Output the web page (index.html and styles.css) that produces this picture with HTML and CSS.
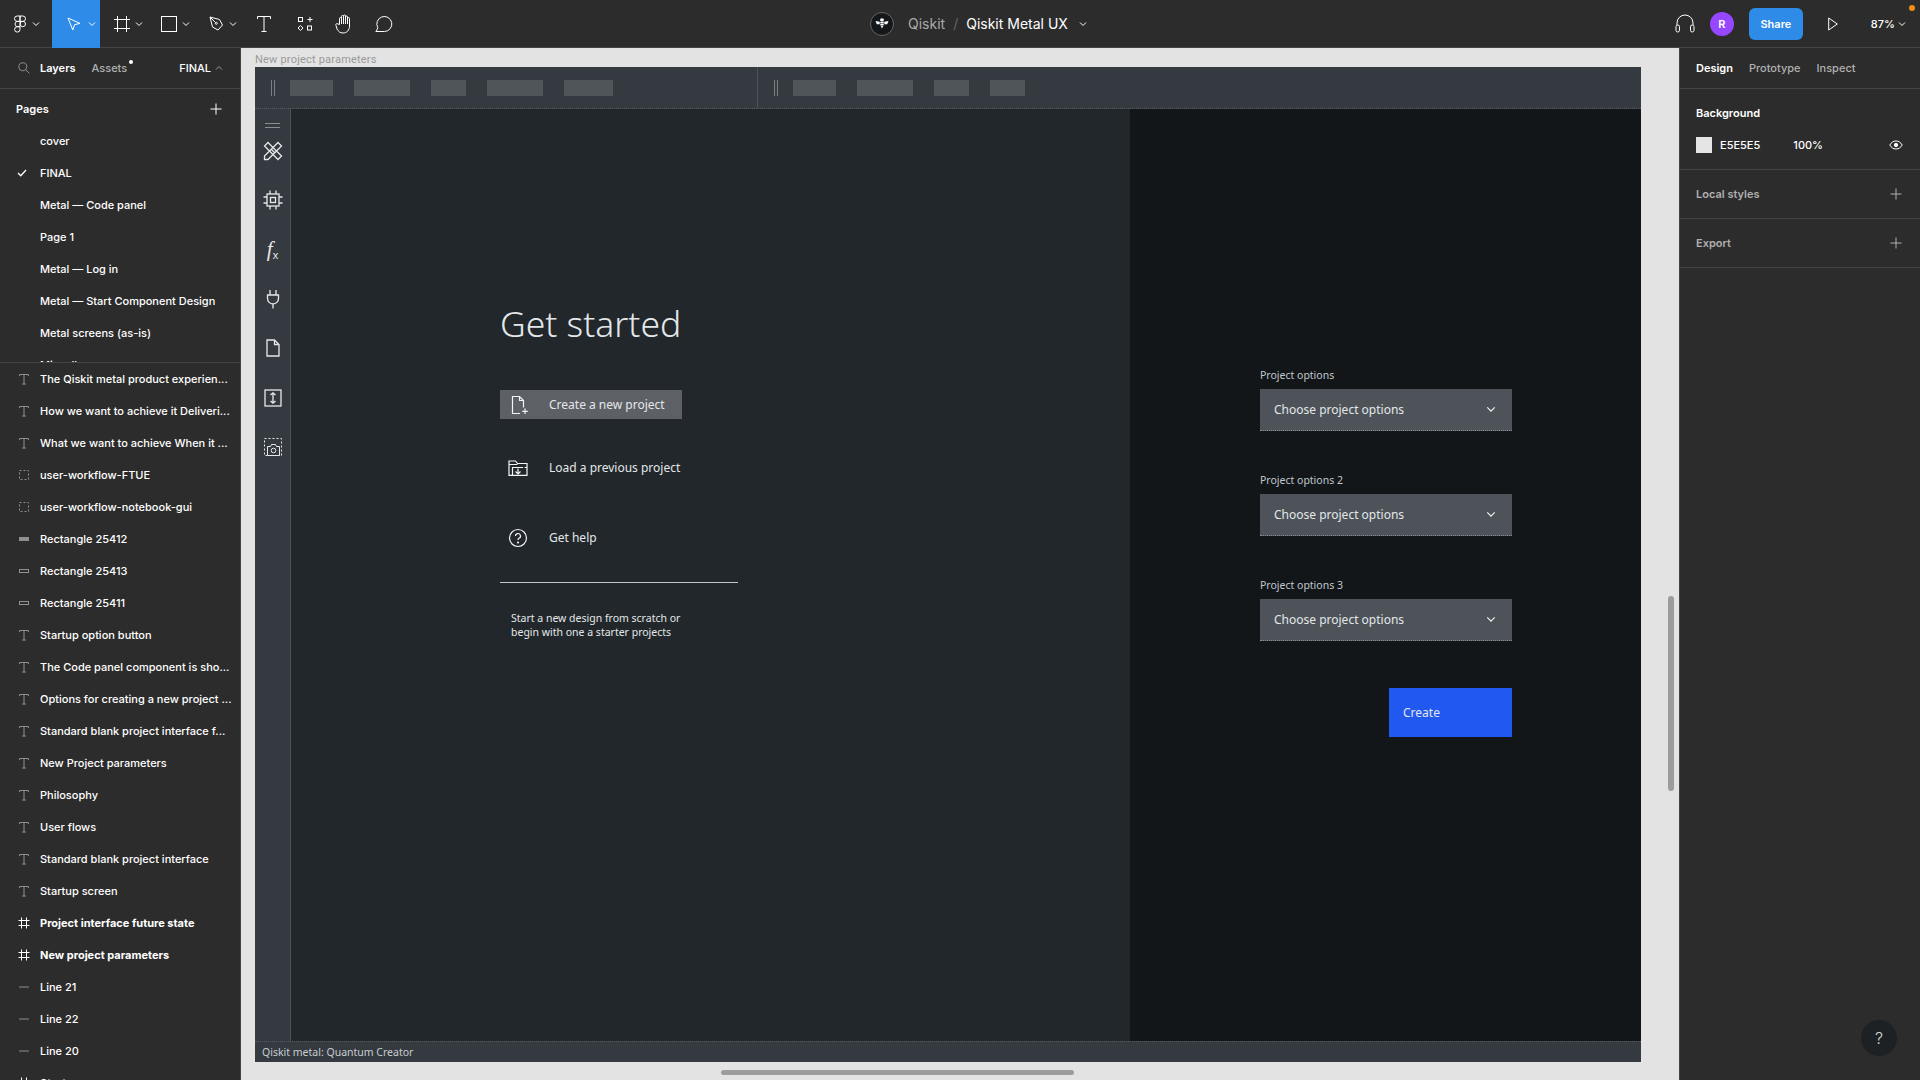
FILE: index.html
```html
<!DOCTYPE html>
<html lang="en">
<head>
    <meta charset="UTF-8">
    <title>Qiskit Metal UX</title>
    <link rel="stylesheet" href="styles.css">
</head>
<body>
    <svg class="icon-defs" width="0" height="0">
        <symbol id="chev" viewBox="0 0 8 6"><path d="M1 1.500l3 3 3-3" fill="none" stroke="currentColor"/></symbol>
        <symbol id="plus" viewBox="0 0 12 12"><path d="M6 0.500v11M0.500 6h11" fill="none" stroke="currentColor"/></symbol>
        <symbol id="t" viewBox="0 0 12 12"><path d="M1.500 3V1.500h9V3M6 1.500v9.500M4 11h4" fill="none" stroke="currentColor"/></symbol>
        <symbol id="dash" viewBox="0 0 12 12"><rect x="1.500" y="1.500" width="9" height="9" fill="none" stroke="currentColor" stroke-dasharray="2 2"/></symbol>
        <symbol id="hash" viewBox="0 0 12 12"><path d="M3.500 0.500v11M8.500 0.500v11M0.500 3.500h11M0.500 8.500h11" fill="none" stroke="currentColor"/></symbol>
        <symbol id="line" viewBox="0 0 12 12"><path d="M1 6h10" fill="none" stroke="currentColor"/></symbol>
    </svg>

    <header class="topbar">
        <div class="tools">
            <div class="tool tool-logo">
                <svg width="12" height="18" viewBox="0 0 12 18" fill="none" stroke="#fff"><path d="M6 1H3.200a2.700 2.700 0 0 0 0 5.400H6zM6 1h2.800a2.700 2.700 0 0 1 0 5.400H6zM6 6.400H3.200a2.700 2.700 0 0 0 0 5.300H6zM6 11.700H3.200A2.700 2.700 0 1 0 6 14.400z"/><circle cx="8.800" cy="9" r="2.700"/></svg>
                <svg class="chev" width="8" height="6"><use href="#chev"/></svg>
            </div>
            <div class="tool tool-move">
                <svg width="14" height="14" viewBox="0 0 14 14" fill="none" stroke="#fff"><path d="M1 1l12 5.400-5.400 1.300L5.800 13z"/></svg>
                <svg class="chev" width="8" height="6"><use href="#chev"/></svg>
            </div>
            <div class="tool tool-frame">
                <svg width="16" height="16" viewBox="0 0 16 16" fill="none" stroke="#fff"><path d="M3.500 0v16M12.500 0v16M0 3.500h16M0 12.500h16"/></svg>
                <svg class="chev" width="8" height="6"><use href="#chev"/></svg>
            </div>
            <div class="tool tool-rect">
                <svg width="16" height="16" viewBox="0 0 16 16" fill="none" stroke="#fff"><rect x="0.500" y="0.500" width="15" height="15"/></svg>
                <svg class="chev" width="8" height="6"><use href="#chev"/></svg>
            </div>
            <div class="tool tool-pen">
                <svg width="16" height="16" viewBox="0 0 16 16" fill="none" stroke="#fff"><path d="M1 1l9.500 2.500 3 5.500-4.500 5-5.500-3zM1 1l5.500 5.500"/><circle cx="7.300" cy="7.300" r="1"/></svg>
                <svg class="chev" width="8" height="6"><use href="#chev"/></svg>
            </div>
            <div class="tool tool-text">
                <svg width="14" height="16" viewBox="0 0 14 16" fill="none" stroke="#fff"><path d="M0.500 3V0.500h13V3M7 0.500v15M4.500 15.500h5"/></svg>
            </div>
            <div class="tool tool-comp">
                <svg width="16" height="16" viewBox="0 0 16 16" fill="none" stroke="#fff"><rect x="1.500" y="1.500" width="4" height="4"/><path d="M10.500 3.500h5M13 1v5"/><path d="M3.500 9.500l2.500 2.500-2.500 2.500-2.500-2.500z"/><rect x="10.500" y="10" width="4" height="4"/></svg>
            </div>
            <div class="tool tool-hand">
                <svg width="18" height="20" viewBox="0 0 18 20" fill="none" stroke="#fff"><path d="M4.500 10.500V4.500a1 1 0 0 1 2 0V2.500a1 1 0 0 1 2 0v-.500a1 1 0 0 1 2 0v1a1 1 0 0 1 2 0v1.500a1 1 0 0 1 2 0V12c0 4-2.500 7-6.500 7-3 0-4.500-1.500-6-4L1 11.500c-.800-1.500 1-2.500 2-1.500z"/><path d="M6.500 4.500V10M8.500 2.500V10M10.500 2V10M12.500 3.500V10"/></svg>
            </div>
            <div class="tool tool-comment">
                <svg width="18" height="18" viewBox="0 0 18 18" fill="none" stroke="#fff"><path d="M1 17l1.800-4.300A7.500 7.500 0 1 1 9.500 16.500H1z"/></svg>
            </div>
        </div>
        <div class="file-title">
            <span class="team-logo">
                <svg width="14" height="11" viewBox="0 0 14 11" fill="#fff"><ellipse cx="7" cy="1.800" rx="2" ry="1.600"/><path d="M5.300 3.800h3.400v1.600H5.300zM5.300 6h3.400v1.500H5.300zM5.800 8.100h2.400L7 10.500zM0.500 3l4.200.800v2.400L1.800 6.300zM13.500 3l-4.200.800v2.400l2.900.100z"/></svg>
            </span>
            <span class="team-name">Qiskit</span>
            <span class="title-slash">/</span>
            <span class="file-name">Qiskit Metal UX</span>
            <svg class="chev" width="8" height="6"><use href="#chev"/></svg>
        </div>
        <div class="top-right">
            <svg class="headphones" width="20" height="19" viewBox="0 0 20 19" fill="none" stroke="#fff"><path d="M2 11V9a8 8 0 0 1 16 0v2"/><rect x="1" y="11" width="3.500" height="7" rx="1.700"/><rect x="15.500" y="11" width="3.500" height="7" rx="1.700"/></svg>
            <span class="user-avatar">R</span>
            <span class="share-btn">Share</span>
            <svg class="play" width="10" height="14" viewBox="0 0 10 14" fill="none" stroke="#fff"><path d="M0.700 1v12L9.300 7z"/></svg>
            <span class="zoom-level">87%</span>
            <svg class="chev" width="8" height="6"><use href="#chev"/></svg>
            <span class="notify-dot"></span>
        </div>
    </header>

    <div class="workspace">
        <aside class="left-panel">
            <div class="panel-tabs">
                <svg class="search-icon" width="12" height="12" viewBox="0 0 12 12" fill="none" stroke="#8c8c8c"><circle cx="4.800" cy="4.800" r="4"/><path d="M7.800 7.800l3.700 3.700"/></svg>
                <span class="tab tab-on">Layers</span>
                <span class="tab tab-assets">Assets</span>
                <span class="page-select">FINAL</span>
                <svg class="page-chev" width="8" height="6" viewBox="0 0 8 6"><path d="M1 4.500l3-3 3 3" fill="none" stroke="#999"/></svg>
            </div>
            <section class="pages">
                <div class="pages-head">
                    <span>Pages</span>
                    <svg width="12" height="12"><use href="#plus"/></svg>
                </div>
                <div class="page-row">cover</div>
                <div class="page-row page-current">
                    <svg class="check" width="10" height="8" viewBox="0 0 10 8"><path d="M1 4l2.800 2.800L9 1" fill="none" stroke="#fff" stroke-width="1.300"/></svg>
                    FINAL
                </div>
                <div class="page-row">Metal — Code panel</div>
                <div class="page-row">Page 1</div>
                <div class="page-row">Metal — Log in</div>
                <div class="page-row">Metal — Start Component Design</div>
                <div class="page-row">Metal screens (as-is)</div>
                <div class="page-row">Miscellaneous</div>
            </section>
            <section class="layers">
                <div class="layer-row"><svg width="12" height="12"><use href="#t"/></svg>The Qiskit metal product experien...</div>
                <div class="layer-row"><svg width="12" height="12"><use href="#t"/></svg>How we want to achieve it Deliveri...</div>
                <div class="layer-row"><svg width="12" height="12"><use href="#t"/></svg>What we want to achieve When it ...</div>
                <div class="layer-row"><svg width="12" height="12"><use href="#dash"/></svg>user-workflow-FTUE</div>
                <div class="layer-row"><svg width="12" height="12"><use href="#dash"/></svg>user-workflow-notebook-gui</div>
                <div class="layer-row"><span class="rect-glyph rect-fill"></span>Rectangle 25412</div>
                <div class="layer-row"><span class="rect-glyph"></span>Rectangle 25413</div>
                <div class="layer-row"><span class="rect-glyph"></span>Rectangle 25411</div>
                <div class="layer-row"><svg width="12" height="12"><use href="#t"/></svg>Startup option button</div>
                <div class="layer-row"><svg width="12" height="12"><use href="#t"/></svg>The Code panel component is sho...</div>
                <div class="layer-row"><svg width="12" height="12"><use href="#t"/></svg>Options for creating a new project ...</div>
                <div class="layer-row"><svg width="12" height="12"><use href="#t"/></svg>Standard blank project interface f...</div>
                <div class="layer-row"><svg width="12" height="12"><use href="#t"/></svg>New Project parameters</div>
                <div class="layer-row"><svg width="12" height="12"><use href="#t"/></svg>Philosophy</div>
                <div class="layer-row"><svg width="12" height="12"><use href="#t"/></svg>User flows</div>
                <div class="layer-row"><svg width="12" height="12"><use href="#t"/></svg>Standard blank project interface</div>
                <div class="layer-row"><svg width="12" height="12"><use href="#t"/></svg>Startup screen</div>
                <div class="layer-row layer-frame"><svg width="12" height="12"><use href="#hash"/></svg>Project interface future state</div>
                <div class="layer-row layer-frame"><svg width="12" height="12"><use href="#hash"/></svg>New project parameters</div>
                <div class="layer-row"><svg width="12" height="12"><use href="#line"/></svg>Line 21</div>
                <div class="layer-row"><svg width="12" height="12"><use href="#line"/></svg>Line 22</div>
                <div class="layer-row"><svg width="12" height="12"><use href="#line"/></svg>Line 20</div>
                <div class="layer-row layer-frame"><svg width="12" height="12"><use href="#hash"/></svg>Startup</div>
            </section>
        </aside>

        <main class="canvas">
            <div class="frame-label">New project parameters</div>
            <div class="frame">
                <div class="app-toolbar">
                    <div class="bar-group bar-group-first">
                        <span class="bar-handle"></span>
                        <span class="bar-block w43"></span>
                        <span class="bar-block w56"></span>
                        <span class="bar-block w35"></span>
                        <span class="bar-block w56"></span>
                        <span class="bar-block w49"></span>
                    </div>
                    <div class="bar-group">
                        <span class="bar-handle"></span>
                        <span class="bar-block w43"></span>
                        <span class="bar-block w56"></span>
                        <span class="bar-block w35"></span>
                        <span class="bar-block w35"></span>
                    </div>
                </div>
                <div class="app-body">
                    <nav class="side-strip">
                        <span class="strip-grip"></span>
                        <span class="strip-slot">
                            <svg width="20" height="20" viewBox="0 0 20 20" fill="none" stroke="#e8e8e8" stroke-width="1.300"><path d="M5 1.500l13.500 13.500-3.500 3.500L1.500 5zM15 1.500l3.500 3.500L5 18.500 1.500 18.500V15z"/><path d="M8 8l4 4"/></svg>
                        </span>
                        <span class="strip-slot">
                            <svg width="20" height="20" viewBox="0 0 20 20" fill="none" stroke="#e8e8e8" stroke-width="1.300"><rect x="4" y="4" width="12" height="12"/><rect x="7.500" y="7.500" width="5" height="5"/><path d="M7 0.500V4M13 0.500V4M7 16v3.500M13 16v3.500M0.500 7H4M0.500 13H4M16 7h3.500M16 13h3.500"/></svg>
                        </span>
                        <span class="strip-slot"><span class="fx-icon">f<sub>x</sub></span></span>
                        <span class="strip-slot">
                            <svg width="14" height="20" viewBox="0 0 14 20" fill="none" stroke="#e8e8e8" stroke-width="1.300"><path d="M4 1v5M10 1v5M1.500 6h11v3.500a5.500 5.500 0 0 1-11 0zM7 15v4.500"/></svg>
                        </span>
                        <span class="strip-slot">
                            <svg width="14" height="18" viewBox="0 0 14 18" fill="none" stroke="#e8e8e8" stroke-width="1.300"><path d="M1 1h7.500L13 5.500V17H1zM8.500 1v4.500H13"/></svg>
                        </span>
                        <span class="strip-slot">
                            <svg width="18" height="18" viewBox="0 0 18 18" fill="none" stroke="#e8e8e8" stroke-width="1.300"><rect x="1" y="1" width="16" height="16"/><path d="M9 4v10M6.500 6L9 3.800 11.500 6M6.500 12L9 14.200 11.500 12"/></svg>
                        </span>
                        <span class="strip-slot">
                            <svg width="18" height="18" viewBox="0 0 18 18" fill="none" stroke="#e8e8e8"><path d="M0.500 0.500h17v17H0.500z" stroke-dasharray="2 2"/><path d="M3.500 8.500h3l1-2h4l1 2h3v9h-12z" fill="#343a3f"/><circle cx="9.500" cy="12.500" r="2.300"/></svg>
                        </span>
                    </nav>
                    <section class="start-pane">
                        <h1 class="start-title">Get started</h1>
                        <div class="start-item start-item-on">
                            <span class="start-icon"><svg class="new-icon" width="18" height="20" viewBox="0 0 18 20" fill="none" stroke="#f2f4f8" stroke-width="1.200"><path d="M9 18.500H1.500v-17h7l4 4v7M8.500 1.500v4h4"/><path d="M14 13.500v5.500M11.300 16.300h5.500"/></svg></span>
                            <span>Create a new project</span>
                        </div>
                        <div class="start-item start-load">
                            <span class="start-icon"><svg width="20" height="16" viewBox="0 0 20 16" fill="none" stroke="#f2f4f8" stroke-width="1.200"><path d="M1 15.300V1h6.500l2 2.500H19v11.800zM1 4.500h8.500"/><path d="M4.500 15V7.500H15M10 8.500v5.500M7.500 11.500l2.500 2.500 2.500-2.500M16.500 7.500H19"/></svg></span>
                            <span>Load a previous project</span>
                        </div>
                        <div class="start-item start-help">
                            <span class="start-icon"><svg width="20" height="20" viewBox="0 0 20 20" fill="none" stroke="#f2f4f8" stroke-width="1.200"><circle cx="10" cy="10" r="8.500"/><path d="M7.500 8a2.500 2.500 0 1 1 3.500 2.300c-.700.300-1 .800-1 1.700"/><circle cx="10" cy="14.500" r=".5"/></svg></span>
                            <span>Get help</span>
                        </div>
                        <hr class="start-rule">
                        <p class="start-note">Start a new design from scratch or<br>begin with one a starter projects</p>
                    </section>
                    <section class="options-pane">
                        <label class="opt-label">Project options</label>
                        <div class="opt-select"><span>Choose project options</span><svg width="10" height="7" viewBox="0 0 8 6"><path d="M.8 1.200L4 4.400l3.200-3.200" fill="none" stroke="#f2f4f8"/></svg></div>
                        <label class="opt-label">Project options 2</label>
                        <div class="opt-select"><span>Choose project options</span><svg width="10" height="7" viewBox="0 0 8 6"><path d="M.8 1.200L4 4.400l3.200-3.200" fill="none" stroke="#f2f4f8"/></svg></div>
                        <label class="opt-label">Project options 3</label>
                        <div class="opt-select"><span>Choose project options</span><svg width="10" height="7" viewBox="0 0 8 6"><path d="M.8 1.200L4 4.400l3.200-3.200" fill="none" stroke="#f2f4f8"/></svg></div>
                        <div class="create-btn">Create</div>
                    </section>
                </div>
                <footer class="app-status">Qiskit metal: Quantum Creator</footer>
            </div>
            <div class="scroll-v"></div>
            <div class="scroll-h"></div>
        </main>

        <aside class="right-panel">
            <div class="panel-tabs right-tabs">
                <span class="tab tab-on">Design</span>
                <span class="tab">Prototype</span>
                <span class="tab">Inspect</span>
            </div>
            <section class="prop-section prop-bg">
                <div class="prop-title">Background</div>
                <div class="bg-row">
                    <span class="swatch"></span>
                    <span class="bg-hex">E5E5E5</span>
                    <span class="bg-pct">100%</span>
                    <svg class="eye" width="14" height="10" viewBox="0 0 14 10" fill="none" stroke="#fff"><path d="M.8 5C2.300 2.300 4.500 1 7 1s4.700 1.300 6.200 4C11.700 7.700 9.500 9 7 9S2.300 7.700.8 5z"/><circle cx="7" cy="5" r="1.700" fill="#fff"/></svg>
                </div>
            </section>
            <section class="prop-section prop-head">
                <span>Local styles</span>
                <svg width="12" height="12"><use href="#plus"/></svg>
            </section>
            <section class="prop-section prop-head">
                <span>Export</span>
                <svg width="12" height="12"><use href="#plus"/></svg>
            </section>
            <div class="help-btn">?</div>
        </aside>
    </div>
</body>
</html>
```

FILE: styles.css
```css
* {
    box-sizing: border-box;
}
html, body {
    margin: 0;
    height: 100%;
    overflow: hidden;
}
body {
    width: 1920px;
    height: 1080px;
    background: #2c2c2c;
    color: #fff;
    font-family: Inter, "Liberation Sans", sans-serif;
    font-size: 11px;
    display: flex;
    flex-direction: column;
}
svg {
    display: block;
    flex-shrink: 0;
}
.icon-defs {
    position: absolute;
}
.chev {
    color: #fff;
}

/* top bar */
.topbar {
    height: 48px;
    flex-shrink: 0;
    display: flex;
    align-items: center;
    border-bottom: 1px solid #444;
    position: relative;
}
.tools {
    display: flex;
    height: 47px;
}
.tool {
    height: 48px;
    width: 48px;
    display: flex;
    align-items: center;
    padding-left: 13px;
    gap: 5px;
}
.tool-logo {
    width: 52px;
    padding-left: 14px;
    gap: 6px;
}
.tool-move {
    background: #2f8be8;
    padding-left: 15px;
    gap: 7px;
}
.tool-frame {
    padding-left: 14px;
}
.tool-pen {
    gap: 4px;
}
.tool-text {
    width: 40px;
}
.tool-comp {
    width: 38px;
}
.tool-hand {
    width: 40px;
}
.file-title {
    position: absolute;
    left: 870px;
    top: 0;
    height: 47px;
    display: flex;
    align-items: center;
    font-size: 14px;
}
.team-logo {
    width: 24px;
    height: 24px;
    border-radius: 50%;
    background: #14181b;
    border: 1px solid #666;
    display: flex;
    align-items: center;
    justify-content: center;
    margin-right: 14px;
}
.team-name {
    color: #aaa;
}
.title-slash {
    color: #666;
    margin: 0 8px 0 8px;
}
.file-name {
    font-weight: 400;
    margin-right: 11px;
}
.top-right {
    margin-left: auto;
    display: flex;
    align-items: center;
    padding-right: 14px;
    position: relative;
    height: 47px;
}
.user-avatar {
    width: 24px;
    height: 24px;
    border-radius: 50%;
    background: #9747ff;
    font-size: 11px;
    font-weight: 600;
    display: flex;
    align-items: center;
    justify-content: center;
    margin-left: 15px;
}
.share-btn {
    width: 54px;
    height: 32px;
    background: #2f8be8;
    border-radius: 6px;
    font-weight: 600;
    display: flex;
    align-items: center;
    justify-content: center;
    margin-left: 15px;
}
.play {
    margin-left: 25px;
}
.zoom-level {
    margin-left: 33px;
    margin-right: 3px;
    font-weight: 500;
}
.notify-dot {
    position: absolute;
    right: 5px;
    top: 5px;
    width: 6px;
    height: 6px;
    border-radius: 50%;
    background: #f08c14;
}

/* layout */
.workspace {
    flex: 1;
    display: flex;
    min-height: 0;
}
.left-panel {
    width: 241px;
    flex-shrink: 0;
    border-right: 1px solid #444;
    overflow: hidden;
}
.right-panel {
    width: 241px;
    flex-shrink: 0;
    border-left: 1px solid #444;
    position: relative;
}
.panel-tabs {
    height: 41px;
    display: flex;
    align-items: center;
    border-bottom: 1px solid #444;
    position: relative;
}
.tab {
    font-weight: 500;
    color: #b0b0b0;
}
.tab-on {
    color: #fff;
    font-weight: 600;
}
.search-icon {
    margin-left: 18px;
    margin-right: 10px;
}
.tab-assets {
    margin-left: 16px;
    position: relative;
}
.tab-assets::after {
    content: "";
    position: absolute;
    right: -6px;
    top: -1px;
    width: 4px;
    height: 4px;
    border-radius: 50%;
    background: #fff;
}
.page-select {
    margin-left: auto;
    font-weight: 500;
    margin-right: 4px;
}
.page-chev {
    margin-right: 17px;
}

/* pages + layers */
.pages {
    height: 274px;
    border-bottom: 1px solid #444;
    overflow: hidden;
}
.pages-head {
    height: 36px;
    padding: 4px 18px 0 16px;
    display: flex;
    align-items: center;
    justify-content: space-between;
    font-weight: 600;
}
.page-row {
    height: 32px;
    line-height: 32px;
    padding-left: 40px;
    font-weight: 500;
    position: relative;
}
.check {
    position: absolute;
    left: 17px;
    top: 12px;
}
.layer-row {
    height: 32px;
    display: flex;
    align-items: center;
    padding-left: 18px;
    gap: 10px;
    font-weight: 500;
    color: #fff;
    white-space: nowrap;
}
.layer-row svg {
    color: #8f8f8f;
}
.layer-frame {
    font-weight: 700;
}
.layer-frame svg {
    color: #fff;
}
.rect-glyph {
    width: 10px;
    height: 4px;
    margin: 0 1px;
    border: 1px solid #8f8f8f;
    flex-shrink: 0;
}
.rect-fill {
    background: #8f8f8f;
}

/* canvas + frame */
.canvas {
    flex: 1;
    background: #e3e3e3;
    padding: 5px 0 0 14px;
    position: relative;
    overflow: hidden;
}
.frame-label {
    height: 14px;
    line-height: 14px;
    color: #9a9a9a;
    font-family: Roboto, sans-serif;
    letter-spacing: 0.2px;
}
.frame {
    width: 1386px;
    height: 995px;
    display: flex;
    flex-direction: column;
    font-family: "Noto Sans", sans-serif;
}
.app-toolbar {
    height: 42px;
    background: #343a3f;
    display: flex;
    border-bottom: 1px dotted #555b60;
}
.bar-group {
    display: flex;
    align-items: center;
    gap: 21px;
    padding-left: 16px;
    position: relative;
}
.bar-group-first {
    width: 503px;
    border-right: 1px solid #4d5358;
}
.bar-handle {
    width: 4px;
    height: 16px;
    border-left: 1px solid #7b8085;
    border-right: 1px solid #7b8085;
    margin-right: -6px;
}
.bar-block {
    height: 16px;
    background: #4f5559;
}
.w43 { width: 43px; }
.w56 { width: 56px; }
.w35 { width: 35px; }
.w49 { width: 49px; }
.app-body {
    flex: 1;
    display: flex;
    min-height: 0;
}
.side-strip {
    width: 36px;
    background: #343a3f;
    border-right: 1px solid #4d5358;
    display: flex;
    flex-direction: column;
    align-items: center;
    padding-top: 14px;
    flex-shrink: 0;
}
.strip-grip {
    width: 15px;
    height: 5px;
    margin-bottom: -1.5px;
    border-top: 1px solid #8a8f94;
    border-bottom: 1px solid #8a8f94;
}
.strip-slot {
    height: 49.3px;
    display: flex;
    align-items: center;
    justify-content: center;
}
.fx-icon {
    font-family: "Liberation Serif", serif;
    font-style: italic;
    font-size: 21px;
    line-height: 20px;
    margin-top: -2px;
    color: #e8e8e8;
}
.fx-icon sub {
    font-family: "Liberation Sans", sans-serif;
    font-style: normal;
    font-size: 11px;
    vertical-align: -3px;
    line-height: 0;
}
.start-pane {
    width: 839px;
    background: #21272a;
    padding-left: 209px;
    flex-shrink: 0;
    color: #e4e7ea;
}
.start-title {
    margin: 190px 0 0 0;
    font-size: 35.5px;
    line-height: 48px;
    font-weight: 300;
    font-family: "Noto Sans", sans-serif;
}
.start-item {
    width: 182px;
    height: 29px;
    display: flex;
    align-items: center;
    font-size: 12px;
    padding-left: 8px;
    white-space: nowrap;
}
.start-icon {
    width: 41px;
    flex-shrink: 0;
}
.new-icon {
    margin-left: 3px;
}
.start-item-on {
    background: #5d6166;
    margin-top: 43px;
}
.start-load {
    margin-top: 34px;
}
.start-help {
    margin-top: 41px;
}
.start-rule {
    width: 238px;
    margin: 30px 0 0 0;
    border: none;
    border-top: 1px solid #c4c7ca;
}
.start-note {
    margin: 28px 0 0 11px;
    font-size: 10.5px;
    line-height: 14px;
}
.options-pane {
    flex: 1;
    background: #121619;
    padding: 258px 0 0 130px;
    color: #e4e7ea;
}
.opt-label {
    display: block;
    height: 16px;
    line-height: 16px;
    font-size: 10.5px;
    color: #c1c7cd;
    margin-bottom: 6px;
}
.opt-select {
    width: 252px;
    height: 42px;
    background: #4d5358;
    border-bottom: 1px dotted #8a8f94;
    display: flex;
    align-items: center;
    justify-content: space-between;
    padding: 0 16px 0 14px;
    font-size: 12px;
    margin-bottom: 41px;
}
.create-btn {
    width: 123px;
    height: 49px;
    margin: 47px 0 0 129px;
    background: #2159f0;
    font-size: 12px;
    display: flex;
    align-items: center;
    padding-left: 14px;
}
.app-status {
    height: 21px;
    background: #343a3f;
    border-top: 1px dotted #555b60;
    color: #c9ccd0;
    font-size: 10.5px;
    line-height: 20px;
    padding-left: 7px;
    flex-shrink: 0;
}
.scroll-v {
    position: absolute;
    left: 1427px;
    top: 548px;
    width: 6px;
    height: 195px;
    border-radius: 3px;
    background: #9c9c9c;
}
.scroll-h {
    position: absolute;
    left: 480px;
    top: 1022px;
    width: 353px;
    height: 5px;
    border-radius: 3px;
    background: #9c9c9c;
}

/* right panel */
.right-tabs {
    gap: 16px;
    padding-left: 16px;
}
.prop-section {
    border-bottom: 1px solid #444;
    padding: 0 16px;
}
.prop-bg {
    height: 81px;
    padding-top: 16px;
}
.prop-title {
    font-weight: 600;
    height: 17px;
    line-height: 17px;
}
.bg-row {
    display: flex;
    align-items: center;
    margin-top: 15px;
    height: 16px;
    font-weight: 500;
}
.swatch {
    width: 16px;
    height: 16px;
    background: #e5e5e5;
}
.bg-hex {
    margin-left: 8px;
}
.bg-pct {
    margin-left: 33px;
}
.eye {
    margin-left: auto;
    margin-right: 1px;
}
.prop-head {
    height: 49px;
    display: flex;
    align-items: center;
    justify-content: space-between;
    color: #b0b0b0;
    font-weight: 600;
    padding-right: 18px;
}
.help-btn {
    position: absolute;
    left: 181px;
    bottom: 24px;
    width: 36px;
    height: 36px;
    border-radius: 50%;
    background: #1e2124;
    color: #d8d8d8;
    font-size: 16px;
    font-weight: 300;
    display: flex;
    align-items: center;
    justify-content: center;
}
```
